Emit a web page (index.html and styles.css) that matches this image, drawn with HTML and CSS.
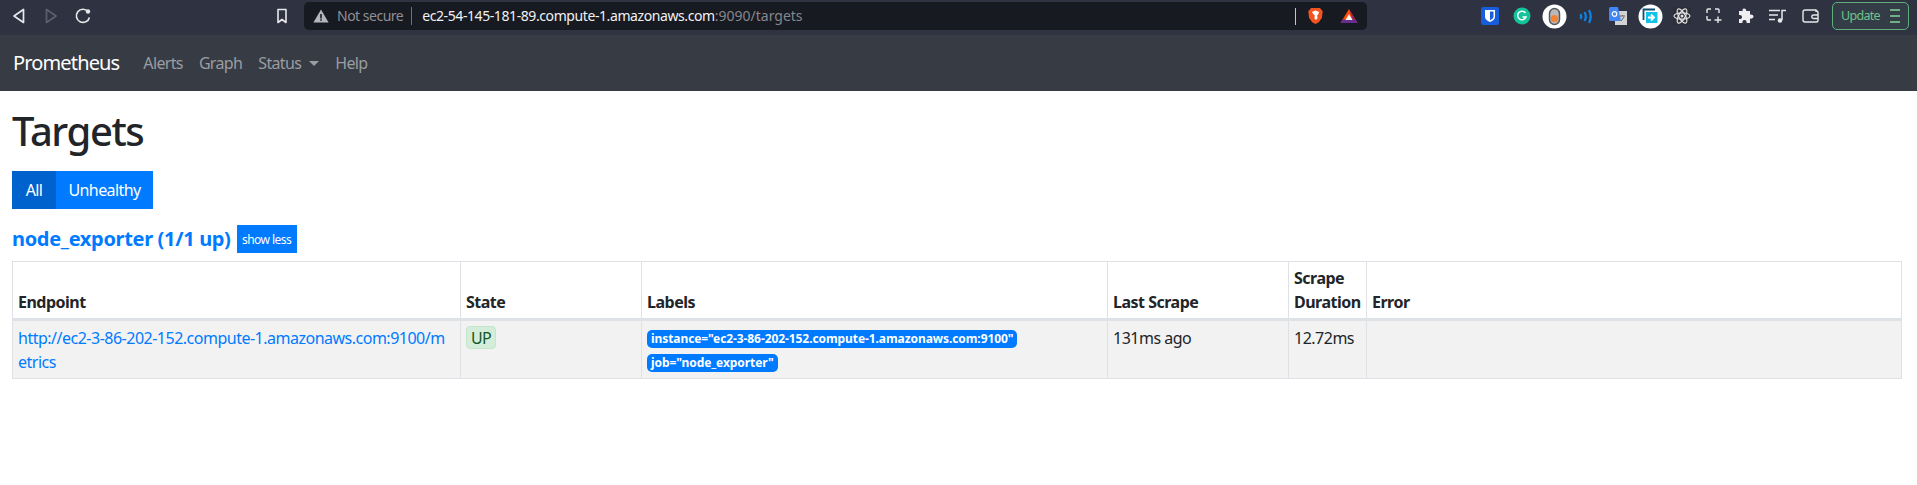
FILE: index.html
```html
<!doctype html>
<html>
  <head>
    <title>Prometheus Time Series Collection and Processing Server</title>
    <meta name="viewport" content="width=device-width,initial-scale=1.0"/>
    <meta charset="utf-8"/>
    <link rel="stylesheet" href="styles.css">
  </head>
  <body>
    <div class="toolbar">
      <div class="slot"><svg width="16" height="18" viewBox="0 0 16 18"><path d="M12.5 2.5v13L3 9z" fill="none" stroke="#e8e8ea" stroke-width="1.7" stroke-linejoin="round"/></svg></div>
      <div class="slot"><svg width="16" height="18" viewBox="0 0 16 18"><path d="M3.5 2.5v13L13 9z" fill="none" stroke="#5c5f6c" stroke-width="1.7" stroke-linejoin="round"/></svg></div>
      <div class="slot"><svg width="18" height="18" viewBox="0 0 18 18"><path d="M14 4.5A6.6 6.6 0 1 0 15.4 10.5" fill="none" stroke="#e8e8ea" stroke-width="1.7"/><circle cx="14" cy="4.5" r="2.2" fill="#e8e8ea"/></svg></div>
      <div class="slot bookmark"><svg width="12" height="16" viewBox="0 0 12 16"><path d="M2 1.5h8v13L6 11.5 2 14.5z" fill="none" stroke="#e8e8ea" stroke-width="1.6" stroke-linejoin="round"/></svg></div>
      <div class="urlbar">
        <svg class="warn" width="16" height="14" viewBox="0 0 16 14"><path d="M8 .5 15.6 13.5H.4z" fill="#b4b6bc"/><path d="M7.2 5h1.6v4.4H7.2zM7.2 10.2h1.6v1.6H7.2z" fill="#1a1c24"/></svg>
        <span class="notsecure">Not secure</span>
        <span class="host">ec2-54-145-181-89.compute-1.amazonaws.com<span class="path">:9090/targets</span></span>
        <span class="sep"></span>
        <svg class="brave" width="17" height="18" viewBox="0 0 17 20"><path d="M3.5 1h10l2 2.500 1 1-.8 7.500-3.500 5-3.700 2-3.700-2-3.500-5L.5 4.500l1-1z" fill="#f1541f"/><path d="M4.500 5.500 8.500 4l4 1.500-1.200 3-1 1 .5 3-1.800 2-1.800-2 .5-3-1-1z" fill="#fff"/></svg>
        <svg class="bat" width="18" height="16" viewBox="0 0 20 18"><path d="M10 1 19.500 17H.5z" fill="#ff5000"/><path d="M10 1 19.500 17H15z" fill="#9e1f63"/><path d="M.5 17l2.500-4h14l2.500 4z" fill="#662d91"/><path d="M10 7l4 6.500H6z" fill="#fff"/></svg>
      </div>
      <div class="extensions">
        <div class="slot"><svg width="18" height="18" viewBox="0 0 18 18"><rect width="18" height="18" rx="2" fill="#175ddc"/><path d="M4 3h10v6.500c0 3-2.500 4.500-5 5.500-2.500-1-5-2.500-5-5.500z" fill="#fff"/><path d="M9 4.500h3.500v5c0 1.800-1.700 2.800-3.500 3.700z" fill="#175ddc"/></svg></div>
        <div class="slot"><svg width="18" height="18" viewBox="0 0 18 18"><circle cx="9" cy="9" r="8.500" fill="#15c39a"/><path d="M12.500 6A4.300 4.300 0 1 0 13 10H9.500" fill="none" stroke="#fff" stroke-width="1.500"/></svg></div>
        <div class="slot"><svg width="25" height="25" viewBox="0 0 25 25"><circle cx="12.500" cy="12.500" r="12" fill="#fff"/><rect x="7.500" y="4.500" width="10" height="16" rx="5" fill="#b9b9b9" stroke="#55585f" stroke-width="1.500"/><circle cx="12.500" cy="14.500" r="3.600" fill="#f58233"/></svg></div>
        <div class="slot"><svg width="15" height="15" viewBox="0 0 15 15"><g fill="none" stroke="#0a84e8" stroke-width="2.200"><path d="M1.500 5a5 5 0 0 1 0 5"/><path d="M5.500 3a9 9 0 0 1 0 9"/><path d="M10 1a14 14 0 0 1 0 13"/></g></svg></div>
        <div class="slot"><svg width="18" height="18" viewBox="0 0 18 18"><rect x="6" y="4" width="12" height="14" fill="#d3d3d3"/><path d="M0 1.500A1.500 1.500 0 0 1 1.500 0H9l3 14H1.500A1.500 1.500 0 0 1 0 12.500z" fill="#4285f4"/><circle cx="5.500" cy="7" r="2.300" fill="none" stroke="#fff" stroke-width="1.200"/><path d="M11 9h5M13.500 8v1M12 14l3-4" stroke="#666" fill="none"/></svg></div>
        <div class="slot"><svg width="25" height="25" viewBox="0 0 25 25"><circle cx="12.500" cy="12.500" r="12" fill="#fff"/><path d="M5.500 16V5.500H17" fill="none" stroke="#0e4f73" stroke-width="1.800"/><rect x="8" y="8" width="11.500" height="11" fill="#12c2e9"/><path d="M10 13.500h5.500M13 10.500l3 3-3 3" fill="none" stroke="#fff" stroke-width="1.800"/></svg></div>
        <div class="slot"><svg width="18" height="18" viewBox="0 0 18 18"><rect width="18" height="18" fill="#2c2e3a"/><g fill="none" stroke="#e2e2e2" stroke-width="1.200"><ellipse cx="9" cy="9" rx="8" ry="3.200"/><ellipse cx="9" cy="9" rx="8" ry="3.200" transform="rotate(60 9 9)"/><ellipse cx="9" cy="9" rx="8" ry="3.200" transform="rotate(120 9 9)"/></g><circle cx="9" cy="9" r="1.500" fill="#e2e2e2"/></svg></div>
        <div class="slot"><svg width="16" height="16" viewBox="0 0 16 16"><path d="M1 5V2a1 1 0 0 1 1-1h3M9 1h3a1 1 0 0 1 1 1v3M1 8v3a1 1 0 0 0 1 1h3M12 8.500V15M8.500 12H15.500" fill="none" stroke="#e8e8ea" stroke-width="1.400"/></svg></div>
        <div class="slot"><svg width="16" height="16" viewBox="0 0 16 16"><path d="M6 .5c1.500 0 2.500 1 2.200 2.500H12v3.500c1.800-.4 3.500.5 3.500 2s-1.700 2.500-3.500 2V15H8.500c.4-1.800-.5-3-2-3s-2.400 1.200-2 3H1v-4c1.800.4 3-.5 3-2S2.800 6.600 1 7V3h3.800C4 1.500 4.800.5 6 .5z" fill="#eeeef0"/></svg></div>
        <div class="slot"><svg width="18" height="14" viewBox="0 0 18 14"><path d="M0 1.500h11M0 6h9M0 10.500h6" stroke="#e8e8ea" stroke-width="1.400"/><path d="M13 11V1.500h4" fill="none" stroke="#e8e8ea" stroke-width="1.500"/><circle cx="11" cy="11.500" r="2.300" fill="#e8e8ea"/></svg></div>
        <div class="slot"><svg width="17" height="14" viewBox="0 0 17 14"><path d="M14 3V1H3a2 2 0 0 0-2 2v8a2 2 0 0 0 2 2h11.500a1.500 1.500 0 0 0 1.500-1.500v-8A1.500 1.500 0 0 0 14.500 2" fill="none" stroke="#e8e8ea" stroke-width="1.400"/><path d="M16 6h-4.500a1.700 1.700 0 0 0 0 3.500H16" fill="none" stroke="#e8e8ea" stroke-width="1.400"/></svg></div>
      </div>
      <div class="update">
        <span>Update</span>
        <span class="burger"><i></i><i></i><i></i></span>
      </div>
    </div>
    <nav class="navbar">
      <a class="brand" href="#">Prometheus</a>
      <a class="navlink" href="#">Alerts</a>
      <a class="navlink" href="#">Graph</a>
      <a class="navlink status" href="#">Status<span class="caret"></span></a>
      <a class="navlink" href="#">Help</a>
    </nav>
    <div class="content">
      <h1>Targets</h1>
      <div class="filter">
        <button class="active">All</button><button>Unhealthy</button>
      </div>
      <div class="pool">
        <a href="#">node_exporter (1/1 up)</a>
        <button class="showless">show less</button>
      </div>
      <table>
        <colgroup>
          <col class="c1"><col class="c2"><col class="c3"><col class="c4"><col class="c5"><col>
        </colgroup>
        <thead>
          <tr>
            <th>Endpoint</th>
            <th>State</th>
            <th>Labels</th>
            <th>Last Scrape</th>
            <th>Scrape Duration</th>
            <th>Error</th>
          </tr>
        </thead>
        <tbody>
          <tr>
            <td class="endpoint"><a href="#">http://ec2-3-86-202-152.compute-1.amazonaws.com:9100/metrics</a></td>
            <td><span class="up">UP</span></td>
            <td class="labels">
              <span class="label">instance="ec2-3-86-202-152.compute-1.amazonaws.com:9100"</span>
              <span class="label">job="node_exporter"</span>
            </td>
            <td>131ms ago</td>
            <td>12.72ms</td>
            <td></td>
          </tr>
        </tbody>
      </table>
    </div>
  </body>
</html>
```
FILE: styles.css
```css
*{
  box-sizing:border-box;
}
html,body{
  margin:0;
  padding:0;
  background:#fff;
}
body{
  font-family:"Noto Sans","Open Sans",sans-serif;
  font-size:16px;
  line-height:24px;
  color:#212529;
  overflow:hidden;
}
a{
  text-decoration:none;
  color:#007bff;
}
button{
  font-family:inherit;
  border:none;
  color:#fff;
  background:#007bff;
  padding:0;
}

/* browser chrome */
.toolbar{
  display:flex;
  align-items:center;
  height:35px;
  padding:0 8px 3px 3px;
  background:#2f3241;
}
.slot{
  flex:none;
  width:32px;
  height:28px;
  display:flex;
  align-items:center;
  justify-content:center;
}
.bookmark{
  margin-left:167px;
}
.urlbar{
  display:flex;
  align-items:center;
  width:1063px;
  height:28px;
  margin-left:6px;
  padding:0 9px;
  background:#181a21;
  border-radius:5px;
  font-size:14px;
  letter-spacing:-.41px;
}
.warn{
  flex:none;
}
.notsecure{
  margin-left:8px;
  padding-right:8px;
  border-right:1px solid #6d6f76;
  line-height:18px;
  color:#8e9096;
  letter-spacing:-.5px;
}
.host{
  margin-left:10px;
  color:#f1f1f3;
}
.path{
  color:#85878d;
  letter-spacing:0;
}
.sep{
  width:1px;
  height:17px;
  margin-left:auto;
  background:#c4c5c8;
}
.brave{
  margin-left:11px;
}
.bat{
  margin-left:16px;
}
.extensions{
  display:flex;
  margin-left:auto;
}
.update{
  display:flex;
  align-items:center;
  justify-content:space-between;
  width:77px;
  height:28px;
  margin-left:6px;
  padding:0 8px;
  border:1px solid #5fae7a;
  border-radius:5px;
  background:#343d47;
  color:#6fc28a;
  font-size:12.5px;
  letter-spacing:-.7px;
}
.burger{
  display:flex;
  flex-direction:column;
  gap:4px;
  width:10px;
}
.burger i{
  height:2px;
  background:#6fae85;
}

/* prometheus nav */
.navbar{
  display:flex;
  align-items:center;
  height:56px;
  padding-left:13px;
  background:#373b44;
}
.brand{
  font-size:20px;
  color:#fff;
  margin-right:24px;
  letter-spacing:-.85px;
}
.navlink{
  color:#9a9da1;
  margin-right:16px;
  letter-spacing:-.65px;
}
.caret{
  display:inline-block;
  margin-left:8px;
  vertical-align:3px;
  border-top:5px solid #9a9da1;
  border-left:5px solid transparent;
  border-right:5px solid transparent;
}

/* page */
.content{
  padding:0 15px 0 12px;
}
h1{
  margin:0;
  padding-top:16px;
  font-size:40px;
  line-height:48px;
  font-weight:500;
  letter-spacing:-1.4px;
}
.filter{
  display:flex;
  margin-top:16px;
}
.filter button{
  width:97px;
  height:38px;
  font-size:16px;
  letter-spacing:-.6px;
}
.filter button.active{
  width:44px;
  background:#0062cc;
}
.pool{
  display:flex;
  align-items:center;
  height:28px;
  margin-top:16px;
}
.pool a{
  font-size:20px;
  font-weight:700;
  letter-spacing:-.33px;
}
.showless{
  width:60px;
  height:28px;
  margin-left:6px;
  font-size:12px;
  letter-spacing:-.55px;
}
table{
  width:100%;
  margin-top:8px;
  border-collapse:collapse;
  table-layout:fixed;
}
.c1{width:448px;}
.c2{width:181px;}
.c3{width:466px;}
.c4{width:181px;}
.c5{width:78px;}
th,td{
  padding:5px 5px 4px;
  border:1px solid #dee2e6;
  text-align:left;
  vertical-align:top;
  word-break:break-all;
  letter-spacing:-.5px;
}
th{
  padding-top:4px;
  vertical-align:bottom;
  border-bottom:3px solid #dee2e6;
  font-weight:700;
  word-break:normal;
}
td{
  height:59px;
  background:#f2f2f2;
}
td.endpoint{
  padding-right:14px;
}
.up{
  display:inline-block;
  padding:0 4px;
  height:23px;
  line-height:22px;
  background:#d4edda;
  border:1px solid #c3e6cb;
  border-radius:4px;
  color:#155724;
  letter-spacing:-.8px;
}
td.labels{
  padding-top:9px;
  padding-bottom:0;
}
.label{
  display:block;
  width:fit-content;
  height:18px;
  padding:0 4px;
  background:#007bff;
  border-radius:5px;
  color:#fff;
  font-size:12px;
  line-height:18px;
  font-weight:700;
  letter-spacing:-.08px;
  word-break:normal;
  white-space:nowrap;
}
.label+.label{
  margin-top:6px;
}
```
